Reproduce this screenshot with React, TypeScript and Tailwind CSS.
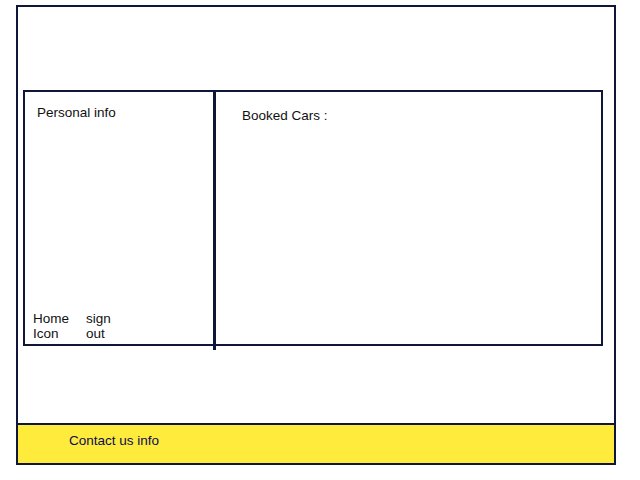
export default function App() {
  return (
    <div className="w-[640px] h-[480px] bg-white pt-[5px] pl-[16px]" style={{ fontFamily: '"Liberation Sans", Arial, sans-serif' }}>
      <div className="w-[600px] h-[460px] border-2 border-[#10163a] flex flex-col">
        <div className="ml-[5px] mt-[83px] w-[580px] h-[256px] border-2 border-[#10163a] flex text-[13.5px] leading-[15px] text-[#111]">
          <div className="w-[188px] flex flex-col justify-between pt-[13px] pb-[3px]">
            <div className="pl-[12px]">Personal info</div>
            <div className="flex pl-[8px]">
              <div className="w-[53px]">Home<br />Icon</div>
              <div>sign<br />out</div>
            </div>
          </div>
          <div className="w-[3px] bg-[#10163a] -mb-[6px]"></div>
          <div className="flex-1 pl-[26px] pt-[16px]">Booked Cars :</div>
        </div>
        <div className="mt-auto h-[40px] border-t-2 border-[#10163a] bg-[#ffeb3b] pl-[51px] pt-[8px] text-[13.5px] leading-[15px] text-[#0c0c50]">
          Contact us info
        </div>
      </div>
    </div>
  );
}
